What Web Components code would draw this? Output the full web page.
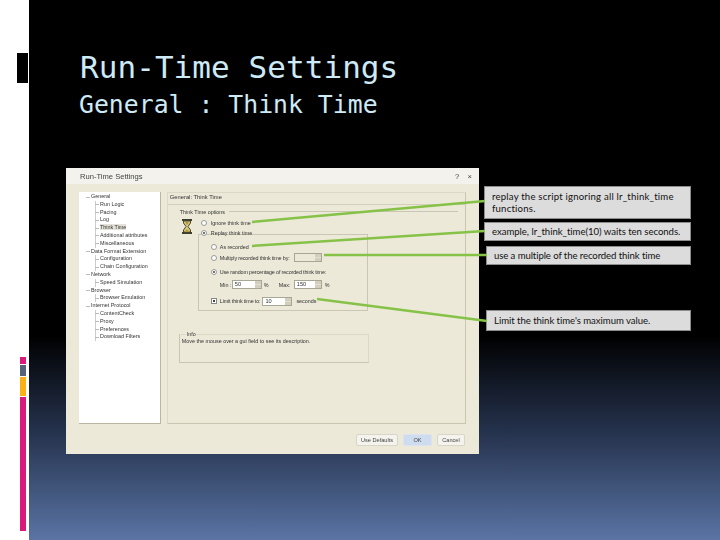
<!DOCTYPE html>
<html>
<head>
<meta charset="utf-8">
<title>Run-Time Settings</title>
<style>
  html, body { margin: 0; padding: 0; background: #fff; }
</style>
</head>
<body>
<slide-page>
  <slide-title slot="title" main="Run-Time Settings" sub="General : Think Time"></slide-title>
  <settings-dialog slot="dialog"></settings-dialog>
  <call-out slot="notes" style="height:33px;letter-spacing:.2px">replay the script ignoring all lr_think_time functions.</call-out>
  <call-out slot="notes" style="height:19px;margin-top:3px;letter-spacing:-.04px">example, lr_think_time(10) waits ten seconds.</call-out>
  <call-out slot="notes" style="height:19px;margin:5px 0 0 2px;letter-spacing:-.1px">use a multiple of the recorded think time</call-out>
  <call-out slot="notes" style="height:21px;margin:45px 0 0 2px;letter-spacing:-.05px">Limit the think time's maximum value.</call-out>
</slide-page>

<script>
const pageTemplate = document.createElement('template');
pageTemplate.innerHTML = `
  <style>
    :host {
      display: grid;
      grid-template-columns: 29px 691px;
      width: 720px;
      height: 540px;
      overflow: hidden;
      position: relative;
    }
    .rail {
      display: flex;
      flex-direction: column;
      background: #fff;
    }
    .tab { width: 11px; height: 30px; margin: 53px 0 274px 17px; background: #000; }
    .strip { width: 6px; margin-left: 20px; margin-bottom: 1px; }
    .main {
      background: linear-gradient(#000 0, #000 335px, #25324d 432px, #5a74a4 540px);
      padding-top: 48px;
    }
    .row {
      display: flex;
      padding-left: 37px;
    }
    .notes {
      display: flex;
      flex-direction: column;
      width: 207px;
      margin: 18px 0 0 5px;
    }
    svg.leaders { position: absolute; left: 0; top: 0; pointer-events: none; }
  </style>
  <div class="rail">
    <div class="tab"></div>
    <div class="strip" style="height:7px;background:#d91a7c"></div>
    <div class="strip" style="height:11px;background:#55627a"></div>
    <div class="strip" style="height:19px;background:#fbb116"></div>
    <div class="strip" style="height:134px;background:#d91a7c"></div>
  </div>
  <div class="main">
    <slot name="title"></slot>
    <div class="row">
      <slot name="dialog"></slot>
      <div class="notes"><slot name="notes"></slot></div>
    </div>
  </div>
  <svg class="leaders" width="720" height="540" fill="none" stroke="#86c247" stroke-width="2.5">
    <line x1="252" y1="222" x2="485" y2="201"/>
    <line x1="252" y1="246" x2="485" y2="231"/>
    <line x1="324" y1="255" x2="487" y2="255"/>
    <line x1="317" y1="299" x2="487" y2="321"/>
  </svg>
`;

class SlidePage extends HTMLElement {
  constructor() {
    super();
    this.attachShadow({ mode: 'open' });
    this.shadowRoot.appendChild(pageTemplate.content.cloneNode(true));
  }
}

const titleTemplate = document.createElement('template');
titleTemplate.innerHTML = `
  <style>
    :host {
      display: block;
      height: 120px;
      padding-left: 51px;
      color: #cdeaf6;
      font-family: "DejaVu Sans Mono", monospace;
    }
    .main { font-size: 31px; line-height: 38px; white-space: pre; letter-spacing: .06px; }
    .sub { font-size: 24.8px; line-height: 38px; margin-left: -1px; white-space: pre; }
  </style>
  <div class="main"></div>
  <div class="sub"></div>
`;

class SlideTitle extends HTMLElement {
  constructor() {
    super();
    this.attachShadow({ mode: 'open' });
    this.shadowRoot.appendChild(titleTemplate.content.cloneNode(true));
    this.shadowRoot.querySelector('.main').textContent = this.getAttribute('main');
    this.shadowRoot.querySelector('.sub').textContent = this.getAttribute('sub');
  }
}

const calloutTemplate = document.createElement('template');
calloutTemplate.innerHTML = `
  <style>
    :host {
      display: flex;
      align-items: center;
      box-sizing: border-box;
      flex: none;
      padding: 1px 6px 0 7px;
      background: #dcdcdc;
      border: 1px solid #8d8d8d;
      color: #111;
      font: 9.6px/12.5px Lato, sans-serif;
    }
  </style>
  <div><slot></slot></div>
`;

class CallOut extends HTMLElement {
  constructor() {
    super();
    this.attachShadow({ mode: 'open' });
    this.shadowRoot.appendChild(calloutTemplate.content.cloneNode(true));
  }
}

const treeData = [
  [0, 'General'], [1, 'Run Logic'], [1, 'Pacing'], [1, 'Log'], [1, 'Think Time', true],
  [1, 'Additional attributes'], [1, 'Miscellaneous'], [0, 'Data Format Extension'],
  [1, 'Configuration'], [1, 'Chain Configuration'], [0, 'Network'], [1, 'Speed Simulation'],
  [0, 'Browser'], [1, 'Browser Emulation'], [0, 'Internet Protocol'], [1, 'ContentCheck'],
  [1, 'Proxy'], [1, 'Preferences'], [1, 'Download Filters']
];

const treeTemplate = document.createElement('template');
treeTemplate.innerHTML = `
  <style>
    :host {
      display: block;
      box-sizing: border-box;
      width: 82px;
      height: 232px;
      padding-top: 1px;
      background: #fff;
      border-right: 1px solid #b9b6a3;
      border-bottom: 1px solid #b9b6a3;
      font-size: 5.4px;
      color: #333;
    }
    .item {
      height: 7.8px;
      line-height: 7.8px;
      white-space: nowrap;
      padding-left: 12px;
      background: linear-gradient(#bbb, #bbb) no-repeat 7px 3.5px / 4px 1px;
    }
    .item.child {
      padding-left: 21px;
      background:
        linear-gradient(#bbb, #bbb) no-repeat 16px 3.5px / 4px 1px,
        linear-gradient(#ccc, #ccc) no-repeat 16px 0 / 1px 100%;
    }
    .item.sel span { background: #e4e2d8; }
  </style>
  <div class="list"></div>
`;

class TreePanel extends HTMLElement {
  constructor() {
    super();
    this.attachShadow({ mode: 'open' });
    this.shadowRoot.appendChild(treeTemplate.content.cloneNode(true));
    const list = this.shadowRoot.querySelector('.list');
    treeData.forEach(([depth, label, selected]) => {
      const row = document.createElement('div');
      row.className = 'item' + (depth ? ' child' : '') + (selected ? ' sel' : '');
      const span = document.createElement('span');
      span.textContent = label;
      row.appendChild(span);
      list.appendChild(row);
    });
  }
}

const spinTemplate = document.createElement('template');
spinTemplate.innerHTML = `
  <style>
    :host {
      display: inline-flex;
      box-sizing: border-box;
      height: 9px;
      background: #fff;
      border: 1px solid #a8a695;
      font-size: 5.6px;
      line-height: 7px;
      color: #333;
    }
    :host([disabled]) { background: #ece9d8; }
    .val { flex: 1; padding-left: 2px; }
    .btn { width: 6px; background: #e2dfcf; display: flex; flex-direction: column; justify-content: space-between; }
    .btn i { height: 3px; background: #d2cfbe; display: block; }
  </style>
  <div class="val"><slot></slot></div>
  <div class="btn"><i></i><i></i></div>
`;

class SpinBox extends HTMLElement {
  constructor() {
    super();
    this.attachShadow({ mode: 'open' });
    this.shadowRoot.appendChild(spinTemplate.content.cloneNode(true));
  }
}

const optionTemplate = document.createElement('template');
optionTemplate.innerHTML = `
  <style>
    :host {
      display: flex;
      align-items: center;
      gap: 3px;
      height: 9px;
      font-size: 5.4px;
      color: #333;
      white-space: nowrap;
    }
    .mark {
      flex: none;
      box-sizing: border-box;
      width: 6px;
      height: 6px;
      border-radius: 50%;
      background: #fff;
      border: 1px solid #999;
      display: flex;
      align-items: center;
      justify-content: center;
    }
    :host([box]) .mark { border-radius: 0; border-color: #888; }
    :host([on]) .mark::after { content: ''; width: 2px; height: 2px; background: #444; border-radius: 50%; }
    :host([box][on]) .mark::after { border-radius: 0; }
  </style>
  <div class="mark"></div>
  <slot></slot>
`;

class OptionRow extends HTMLElement {
  constructor() {
    super();
    this.attachShadow({ mode: 'open' });
    this.shadowRoot.appendChild(optionTemplate.content.cloneNode(true));
  }
}

const dialogTemplate = document.createElement('template');
dialogTemplate.innerHTML = `
  <style>
    :host {
      display: block;
      width: 413px;
      height: 286px;
      flex: none;
      background: #ece9d8;
      font-family: "Liberation Sans", sans-serif;
      filter: blur(0.4px);
      color: #333;
    }
    .bar {
      display: flex;
      justify-content: space-between;
      align-items: center;
      height: 16px;
      padding: 0 7px 0 14px;
      background: #f3f2ec;
      font-size: 7.6px;
      color: #444;
    }
    .body {
      display: flex;
      gap: 6px;
      padding: 8px 13px 0;
    }
    .panel {
      box-sizing: border-box;
      width: 300px;
      height: 232px;
      border: 1px solid #c9c6b3;
      border-left-color: #dcd9c8;
      border-top-color: #dcd9c8;
      font-size: 5.4px;
    }
    .head {
      height: 11px;
      line-height: 9px;
      padding-left: 2px;
      border-bottom: 1px solid #d2cfbd;
      font-size: 5.8px;
    }
    .opts-title {
      display: flex;
      align-items: center;
      gap: 4px;
      margin: 2px 7px 0 12px;
      height: 9px;
    }
    .opts-title i { flex: 1; border-top: 1px solid #c9c6b3; }
    .opts {
      display: flex;
      gap: 8px;
      margin: 3px 0 0 14px;
    }
    .glass { flex: none; }
    .wrap { margin-left: 1px; }
    .top { gap: 4px; }
    .group {
      box-sizing: border-box;
      width: 170px;
      height: 77px;
      margin: -4px 0 0 -3px;
      padding: 0 0 0 12px;
      border: 1px solid #c9c6b3;
    }
    .tight { letter-spacing: -.14px; }
    .line { display: flex; align-items: center; height: 9px; white-space: nowrap; }
    .hint {
      box-sizing: border-box;
      width: 190px;
      height: 29px;
      margin: 23px 0 0 11px;
      padding-left: 2px;
      border: 1px solid #c9c6b3;
      border-top-color: #dcd9c8;
      border-right-color: #dcd9c8;
      white-space: nowrap;
    }
    .hint b { display: block; font-weight: normal; width: max-content; margin: -4px 0 1px 4px; background: #ece9d8; padding: 0 1px; }
    .foot {
      display: flex;
      justify-content: flex-end;
      gap: 5px;
      padding: 10px 14px 0 0;
    }
    .foot button {
      box-sizing: border-box;
      height: 12px;
      padding: 0;
      border: 1px solid #d8d6c8;
      border-radius: 2px;
      background: #f4f3ee;
      font: 5.6px "Liberation Sans", sans-serif;
      color: #444;
    }
    .foot button.ok { background: #cfdcf0; border-color: #dbe3ee; }
  </style>
  <div class="bar"><span>Run-Time Settings</span><span>?&nbsp;&nbsp;&nbsp;&nbsp;×</span></div>
  <div class="body">
    <tree-panel></tree-panel>
    <div class="panel">
      <div class="head">General: Think Time</div>
      <div class="opts-title"><span>Think Time options</span><i></i></div>
      <div class="opts">
        <svg class="glass" width="10" height="15" viewBox="0 0 10 15">
          <rect x="0" y="0" width="10" height="2" fill="#3d3d2c"/>
          <rect x="0" y="13" width="10" height="2" fill="#3d3d2c"/>
          <path d="M1.500 2h7v2l-2.500 3.500 2.500 3.500v2h-7v-2l2.500-3.500-2.500-3.500z" fill="#d9c77a" stroke="#4a4a36"/>
          <path d="M3 3h4l-2 3zM5 10l2.500 3h-5z" fill="#b59a3c"/>
        </svg>
        <div class="wrap">
          <option-row class="top" style="margin-top:-1px">Ignore think time</option-row>
          <option-row class="top" style="margin-top:1.500px" on>Replay think time</option-row>
          <div class="group">
            <option-row style="margin-top:8px">As recorded</option-row>
            <option-row style="margin-top:1.500px"><span class="tight">Multiply recorded think time by:</span><spin-box disabled style="width:28px;margin-left:1px"></spin-box></option-row>
            <option-row style="margin-top:5.500px" on><span class="tight">Use random percentage of recorded think time:</span></option-row>
            <div class="line" style="margin:3.500px 0 0 9px">
              <span style="width:12px">Min :</span><spin-box style="width:30px">50</spin-box><span style="margin-left:2px;width:15px">%</span>
              <span style="width:15px">Max:</span><spin-box style="width:28px">150</spin-box><span style="margin-left:3px">%</span>
            </div>
            <option-row box on style="margin-top:7.500px"><span class="tight">Limit think time to:</span><spin-box style="width:30px;margin-left:-1px">10</spin-box><span style="margin-left:1px">seconds</span></option-row>
          </div>
        </div>
      </div>
      <div class="hint"><b>Info</b>Move the mouse over a gui field to see its description.</div>
    </div>
  </div>
  <div class="foot">
    <button style="width:42px">Use Defaults</button>
    <button class="ok" style="width:29px">OK</button>
    <button style="width:28px">Cancel</button>
  </div>
`;

class SettingsDialog extends HTMLElement {
  constructor() {
    super();
    this.attachShadow({ mode: 'open' });
    this.shadowRoot.appendChild(dialogTemplate.content.cloneNode(true));
  }
}

customElements.define('slide-page', SlidePage);
customElements.define('slide-title', SlideTitle);
customElements.define('call-out', CallOut);
customElements.define('tree-panel', TreePanel);
customElements.define('spin-box', SpinBox);
customElements.define('option-row', OptionRow);
customElements.define('settings-dialog', SettingsDialog);
</script>
</body>
</html>
